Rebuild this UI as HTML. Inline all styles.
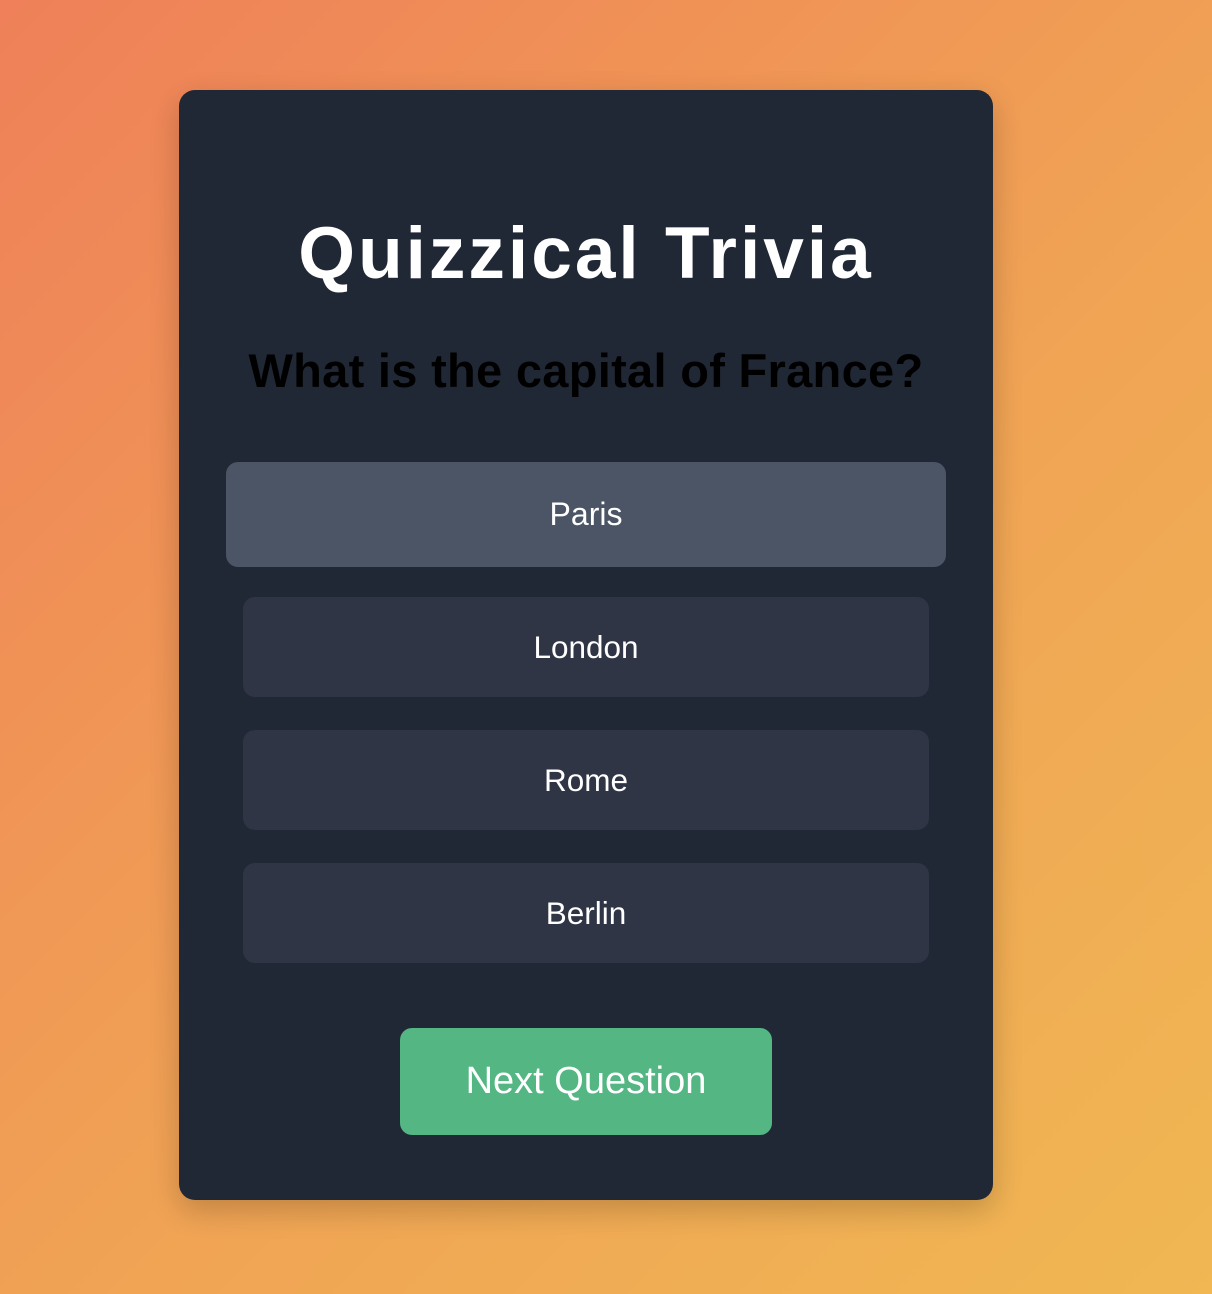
<!DOCTYPE html>
<html><head><meta charset="utf-8"><style>
html,body{margin:0;padding:0;}
body{width:1212px;height:1294px;background:linear-gradient(135deg,#ef8059 0%,#f0a354 55%,#f0b753 100%);font-family:"Liberation Sans",sans-serif;position:relative;overflow:hidden;}
.card{position:absolute;left:179px;top:90px;width:814px;height:1110px;background:#212835;border-radius:16px;box-shadow:0 10px 30px rgba(0,0,0,0.2);}
h1{position:absolute;left:0;width:814px;margin:0;text-align:center;color:#fff;font-size:73px;font-weight:bold;letter-spacing:3px;line-height:84px;top:122px;}
h2{position:absolute;left:0;width:814px;top:253px;margin:0;text-align:center;color:#000;font-size:47px;font-weight:bold;line-height:56px;letter-spacing:0.3px;}
.opt{position:absolute;left:64px;width:686px;height:100px;background:#2f3545;border-radius:12px;color:#fff;font-size:31.5px;text-align:center;line-height:100px;}
.sel{left:47px;width:720px;height:105px;line-height:105px;background:#4b5565;font-size:32px;}
.next{position:absolute;left:221px;top:938px;width:372px;height:107px;background:#53b683;border-radius:12px;color:#fff;font-size:38px;text-align:center;line-height:107px;}
</style></head><body>
<div class="card">
<h1>Quizzical Trivia</h1>
<h2>What is the capital of France?</h2>
<div class="opt sel" style="top:372px">Paris</div>
<div class="opt" style="top:507px">London</div>
<div class="opt" style="top:640px">Rome</div>
<div class="opt" style="top:773px">Berlin</div>
<div class="next">Next Question</div>
</div>
</body></html>
